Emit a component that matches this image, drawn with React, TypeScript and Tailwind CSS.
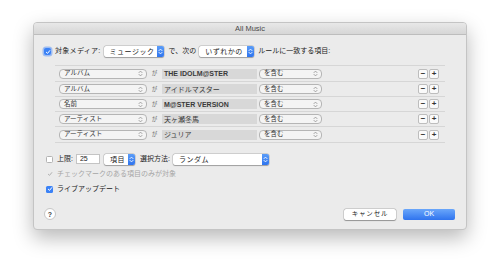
import React from 'react';

const font = { fontFamily: '"Liberation Sans", "Noto Sans CJK JP", sans-serif' };

const rules = [
  { field: 'アルバム', value: 'THE IDOLM@STER', h: 'h-[16px]', latin: true },
  { field: 'アルバム', value: 'アイドルマスター', h: 'h-[15px]', latin: false },
  { field: '名前', value: 'M@STER VERSION', h: 'h-[15px]', latin: true },
  { field: 'アーティスト', value: '天ヶ瀬冬馬', h: 'h-[15px]', latin: false },
  { field: 'アーティスト', value: 'ジュリア', h: 'h-[16px]', latin: false },
];

const Chevrons = ({ color }: { color: string }) => (
  <svg width="5" height="7" viewBox="0 0 5 7" fill="none" stroke={color} strokeWidth="0.9" strokeLinecap="round" strokeLinejoin="round">
    <path d="M1 2.6 L2.5 1.1 L4 2.6" />
    <path d="M1 4.4 L2.5 5.9 L4 4.4" />
  </svg>
);

const Check = ({ color = 'white' }: { color?: string }) => (
  <svg width="6" height="6" viewBox="0 0 6 6" fill="none" stroke={color} strokeWidth="1" strokeLinecap="round" strokeLinejoin="round">
    <path d="M1.3 3.2 L2.5 4.4 L4.8 1.6" />
  </svg>
);

// popup with blue stepper on the right
const BluePopup = ({ label, w }: { label: string; w: string }) => (
  <div className={`${w} h-[11px] flex items-stretch rounded-[2px] bg-white shadow-[0_0_0_0.5px_rgba(0,0,0,0.2),0_0.5px_1px_rgba(0,0,0,0.25)]`}>
    <span className="flex-1 pl-[6px] text-[7px] leading-[11px] text-[#222] tracking-[0.5px]">{label}</span>
    <span className="w-[7px] flex items-center justify-center rounded-r-[2px] bg-gradient-to-b from-[#5a9cf8] to-[#2f74ee]">
      <Chevrons color="white" />
    </span>
  </div>
);

// rule popup with plain gray outline
const GrayPopup = ({ label, w }: { label: string; w: string }) => (
  <div className={`${w} h-[10px] flex items-center justify-between rounded-[4px] bg-[#f4f4f4] border border-[#b5b5b5] pl-[4px] pr-[3px]`}>
    <span className="text-[6.5px] leading-none text-[#333]">{label}</span>
    <Chevrons color="#9a9a9a" />
  </div>
);

const SmallBtn = ({ children }: { children: React.ReactNode }) => (
  <div className="w-[10px] h-[10px] flex items-center justify-center rounded-[2px] bg-[#fafafa] border border-[#bdbdbd] text-[8px] leading-none font-bold text-[#333]">
    {children}
  </div>
);

export default function App() {
  return (
    <div className="w-[500px] h-[274px] bg-white overflow-hidden" style={font}>
      <div className="pt-[22px] pl-[33px]">
        <div className="w-[434px] h-[208px] flex flex-col bg-[#ebebeb] rounded-[4px] border border-[#c4c4c4] shadow-[0_8px_20px_rgba(0,0,0,0.28)] overflow-hidden">
          {/* title bar */}
          <div className="h-[12px] shrink-0 flex items-center justify-center bg-gradient-to-b from-[#e8e8e8] to-[#d6d6d6] border-b border-[#bdbdbd] text-[7.5px] text-[#4a4a4a]">
            All Music
          </div>

          {/* media row */}
          <div className="mt-[11px] h-[11px] flex items-center pl-[10px] text-[7px] text-[#222]">
            <div className="w-[7px] h-[7px] flex items-center justify-center rounded-[2px] bg-[#3b82f6] shadow-[0_0_0_1.5px_rgba(96,152,246,0.55)]">
              <Check />
            </div>
            <span className="ml-[4px] mr-[3px] tracking-[0.3px]">対象メディア:</span>
            <BluePopup label="ミュージック" w="w-[60px]" />
            <span className="ml-[5px] mr-[3px]">で、次の</span>
            <BluePopup label="いずれかの" w="w-[55px]" />
            <span className="ml-[4px]">ルールに一致する項目:</span>
          </div>

          {/* rules */}
          <div className="mt-[8px] ml-[21px] w-[390px] flex flex-col border-b border-[#d6d6d6]">
            {rules.map((r, i) => (
              <div key={i} className={`${r.h} flex items-center border-t border-[#d6d6d6] pl-[4px] pr-[6px]`}>
                <GrayPopup label={r.field} w="w-[88px]" />
                <span className="w-[15px] text-center text-[5.5px] text-[#666]">が</span>
                <div className={`w-[95px] h-[10px] flex items-center bg-[#d8d8d8] pl-[2px] text-[7px] leading-none text-[#3a3a3a] ${r.latin ? 'font-bold' : 'font-normal'}`}>
                  {r.value}
                </div>
                <div className="ml-[2px]">
                  <GrayPopup label="を含む" w="w-[63px]" />
                </div>
                <div className="ml-auto flex gap-[1px]">
                  <SmallBtn>−</SmallBtn>
                  <SmallBtn>+</SmallBtn>
                </div>
              </div>
            ))}
          </div>

          {/* limit row */}
          <div className="mt-[11px] h-[10px] flex items-center pl-[12px] text-[7px] text-[#222]">
            <div className="w-[7px] h-[7px] rounded-[1.5px] bg-white border border-[#b3b3b3]" />
            <span className="ml-[4px] mr-[3px]">上限:</span>
            <div className="w-[24px] h-[10px] bg-white border border-[#c4c4c4] pl-[3px] text-[7px] leading-[8px]">25</div>
            <div className="ml-[4px]">
              <BluePopup label="項目" w="w-[31px]" />
            </div>
            <span className="ml-[5px] mr-[3px]">選択方法:</span>
            <BluePopup label="ランダム" w="w-[96px]" />
          </div>

          {/* checked only */}
          <div className="mt-[5px] h-[10px] flex items-center pl-[12px] text-[7px] text-[#a6a6a6]">
            <div className="w-[7px] h-[7px] flex items-center justify-center">
              <Check color="#b0b0b0" />
            </div>
            <span className="ml-[4px]">チェックマークのある項目のみが対象</span>
          </div>

          {/* live update */}
          <div className="mt-[5px] h-[10px] flex items-center pl-[12px] text-[7px] text-[#222]">
            <div className="w-[7px] h-[7px] flex items-center justify-center rounded-[1.5px] bg-[#3b82f6]">
              <Check />
            </div>
            <span className="ml-[4px]">ライブアップデート</span>
          </div>

          {/* buttons */}
          <div className="mt-[14px] flex items-center pl-[10px] pr-[11px]">
            <div className="w-[12px] h-[12px] rounded-full bg-white border border-[#c6c6c6] flex items-center justify-center text-[7px] text-[#444] font-bold leading-none">
              ?
            </div>
            <div className="ml-auto w-[52px] h-[11px] flex items-center justify-center rounded-[2px] bg-white shadow-[0_0_0_0.5px_rgba(0,0,0,0.2),0_0.5px_1px_rgba(0,0,0,0.3)] text-[6.5px] text-[#222] tracking-[0.8px]">
              キャンセル
            </div>
            <div className="ml-[7px] w-[52px] h-[11px] flex items-center justify-center rounded-[2px] bg-gradient-to-b from-[#6aa6fa] to-[#2f73ee] text-[7px] text-white">
              OK
            </div>
          </div>
        </div>
      </div>
    </div>
  );
}
